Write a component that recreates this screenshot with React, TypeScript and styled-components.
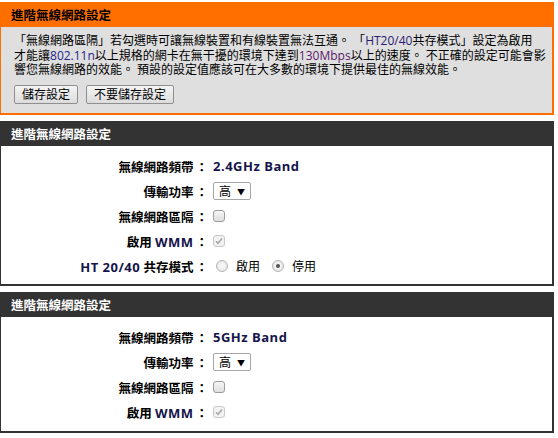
import React from 'react';
import styled, { createGlobalStyle } from 'styled-components';

const GlobalStyle = createGlobalStyle`
  body {
    margin: 0;
    background: #fff;
    font-family: "Open Sans", "Noto Sans CJK TC", sans-serif;
    font-size: 12px;
    color: #000;
  }
`;

const Page = styled.div`
  width: 554px;
  padding-top: 2px;
  display: flex;
  flex-direction: column;
  gap: 6px;
`;

const NoticeBox = styled.section`
  border: solid #ff6f00;
  border-width: 0 2px 2px 1px;
  background: #dfdfdf;
`;

const NoticeTitle = styled.h2`
  margin: 0 -2px 0 -1px;
  height: 25px;
  display: flex;
  align-items: center;
  padding-left: 11px;
  background: #ff6f00;
  font-size: 12.5px;
  font-weight: 700;
  color: #000;
`;

const NoticeBody = styled.div`
  padding: 7px 12px 9px 13px;
`;

const NoticeLine = styled.div`
  line-height: 14.5px;
  white-space: nowrap;
  font-size: 12px;
`;

const Latin = styled.span<{ $tone: string }>`
  color: ${(p) => p.$tone};
`;

const BoldLatin = styled.span`
  font-size: 13px;
  letter-spacing: 0.5px;
  color: #14144a;
`;

const ButtonRow = styled.div`
  display: flex;
  gap: 8px;
  margin-top: 7px;
`;

const Button = styled.button`
  height: 19px;
  padding: 0 7px;
  border: 1px solid #8f8f8f;
  border-radius: 2px;
  background: linear-gradient(#f4f4f4, #dcdcdc);
  font-family: "Open Sans", "Noto Sans CJK TC", sans-serif;
  font-size: 12px;
  color: #000;
  line-height: 17px;
`;

const Panel = styled.section`
  display: flex;
  flex-direction: column;
`;

const PanelTitle = styled.h2`
  margin: 0;
  height: 25px;
  display: flex;
  align-items: center;
  padding-left: 11px;
  background: #333;
  color: #fff;
  font-size: 12.5px;
  font-weight: 700;
`;

const PanelBody = styled.div<{ $bottom: number }>`
  border: solid #333;
  border-width: 0 2px 2px 1px;
  background: #fff;
  padding: 8px 0 ${(p) => p.$bottom}px;
`;

const Row = styled.div`
  height: 25px;
  display: grid;
  grid-template-columns: 207px 1fr;
  column-gap: 5px;
  align-items: center;
`;

const Label = styled.div`
  text-align: right;
  font-weight: 700;
  font-size: 12.5px;
  white-space: nowrap;
`;

const Colon = styled.span`
  margin-left: 2px;
`;

const Value = styled.div`
  display: flex;
  align-items: center;
  font-weight: 700;
`;

const SelectBox = styled.div`
  width: 38px;
  height: 18px;
  box-sizing: border-box;
  border: 1px solid #a6a6a6;
  border-radius: 2px;
  background: #fff;
  display: flex;
  align-items: center;
  justify-content: space-between;
  padding: 0 5px;
  font-weight: 400;
  color: #000;
  font-size: 12px;
`;

const Arrow = styled.span`
  font-size: 8px;
`;

const CheckBox = styled.span`
  width: 12px;
  height: 12px;
  box-sizing: border-box;
  border: 1px solid #9c9c9c;
  border-radius: 3px;
  background: linear-gradient(#f6f6f6, #dedede);
  display: inline-flex;
  align-items: center;
  justify-content: center;
`;

const DisabledCheck = styled(CheckBox)`
  border-color: #c8c8c8;
  background: #f2f2f2;
`;

const RadioGroup = styled.div`
  display: flex;
  align-items: center;
  font-weight: 400;
  color: #000;
  padding-left: 3px;
`;

const Radio = styled.span<{ $on?: boolean }>`
  width: 12px;
  height: 12px;
  box-sizing: border-box;
  border-radius: 50%;
  border: 1px solid #b4b4b4;
  background: radial-gradient(circle, #fafafa, #e2e2e2);
  display: inline-flex;
  align-items: center;
  justify-content: center;
  margin-right: 8px;

  &::after {
    content: '';
    display: ${(p) => (p.$on ? 'block' : 'none')};
    width: 4px;
    height: 4px;
    border-radius: 50%;
    background: #555;
  }
`;

const RadioText = styled.span`
  margin-right: 12px;
`;

function Check() {
  return (
    <svg width="8" height="8" viewBox="0 0 8 8">
      <path d="M1 4.2 L3 6.3 L7 1.5" fill="none" stroke="#a8a8a8" strokeWidth="1.5" />
    </svg>
  );
}

function Field({ label, children }: { label: React.ReactNode, children: React.ReactNode }) {
  return (
    <Row>
      <Label>
        {label}
        <Colon>：</Colon>
      </Label>
      <Value>{children}</Value>
    </Row>
  );
}

function BandPanel({ band, coexist }: { band: string, coexist?: boolean }) {
  return (
    <Panel>
      <PanelTitle>進階無線網路設定</PanelTitle>
      <PanelBody $bottom={coexist ? 5 : 6}>
        <Field label="無線網路頻帶">
          <BoldLatin>{band}</BoldLatin>
        </Field>
        <Field label="傳輸功率">
          <SelectBox>
            高
            <Arrow>▼</Arrow>
          </SelectBox>
        </Field>
        <Field label="無線網路區隔">
          <CheckBox />
        </Field>
        <Field label={<>啟用 <BoldLatin>WMM</BoldLatin></>}>
          <DisabledCheck>
            <Check />
          </DisabledCheck>
        </Field>
        {coexist && (
          <Field label={<><BoldLatin>HT 20/40</BoldLatin> 共存模式</>}>
            <RadioGroup>
              <Radio />
              <RadioText>啟用</RadioText>
              <Radio $on />
              <RadioText>停用</RadioText>
            </RadioGroup>
          </Field>
        )}
      </PanelBody>
    </Panel>
  );
}

export default function App() {
  return (
    <>
      <GlobalStyle />
      <Page>
        <NoticeBox>
          <NoticeTitle>進階無線網路設定</NoticeTitle>
          <NoticeBody>
            <NoticeLine>
              「無線網路區隔」若勾選時可讓無線裝置和有線裝置無法互通。 「
              <Latin $tone="#2a1a70">HT20/40</Latin>
              共存模式」設定為啟用
            </NoticeLine>
            <NoticeLine>
              才能讓
              <Latin $tone="#24248a">802.11n</Latin>
              以上規格的網卡在無干擾的環境下達到
              <Latin $tone="#5a1a6a">130Mbps</Latin>
              以上的速度。 不正確的設定可能會影
            </NoticeLine>
            <NoticeLine>響您無線網路的效能。 預設的設定值應該可在大多數的環境下提供最佳的無線效能。</NoticeLine>
            <ButtonRow>
              <Button>儲存設定</Button>
              <Button>不要儲存設定</Button>
            </ButtonRow>
          </NoticeBody>
        </NoticeBox>
        <BandPanel band="2.4GHz Band" coexist />
        <BandPanel band="5GHz Band" />
      </Page>
    </>
  );
}
